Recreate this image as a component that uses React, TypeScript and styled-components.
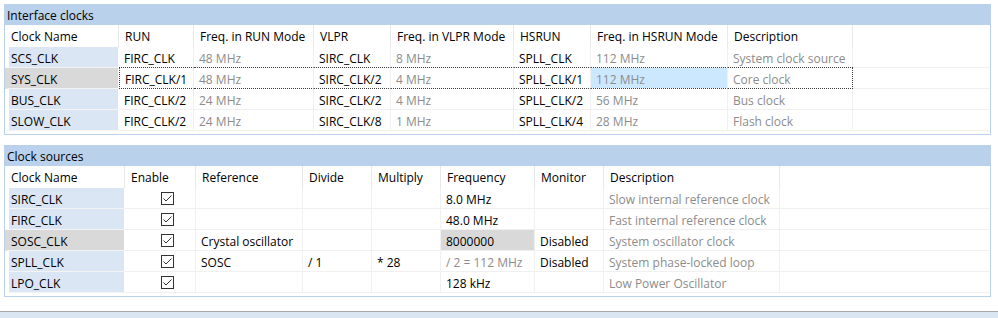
import React from 'react';
import styled, { createGlobalStyle, css } from 'styled-components';

const GlobalStyle = createGlobalStyle`
  html, body {
    margin: 0;
    padding: 0;
    background: #ffffff;
  }
  body {
    font-family: 'Segoe UI', 'Open Sans', 'Noto Sans', sans-serif;
    font-size: 12px;
    color: #000000;
  }
`;

const Page = styled.div`
  width: 998px;
  height: 318px;
  padding: 4px 0 0 4px;
  box-sizing: border-box;
  display: flex;
  flex-direction: column;
  overflow: hidden;
`;

const Panel = styled.section`
  width: 987px;
  border: 1px solid #b9d1ea;
  border-top: none;
  box-sizing: border-box;
  padding-bottom: 3px;
  & + & {
    margin-top: 10px;
  }
`;

const TitleBar = styled.div`
  height: 21px;
  line-height: 24px;
  background: #b9d1ea;
  padding-left: 3px;
  margin: 0 -1px;
  overflow: hidden;
`;

const Row = styled.div<{ $cols: string; $head?: boolean }>`
  display: grid;
  grid-template-columns: ${({ $cols }) => $cols};
  height: ${({ $head }) => ($head ? '22px' : '21px')};
`;

const HeadCell = styled.div<{ $last?: boolean }>`
  border-right: 1px solid ${({ $last }) => ($last ? 'transparent' : '#e8e8e8')};
  padding-left: 6px;
  line-height: 24px;
  white-space: nowrap;
  overflow: hidden;
`;

type Fill = 'none' | 'gray' | 'select';
type Focus = 'start' | 'mid' | 'end';

const fills: Record<Fill, string> = {
  none: 'transparent',
  gray: '#d9d9d9',
  select: '#cce8ff',
};

const Cell = styled.div<{ $muted?: boolean; $fill?: Fill; $focus?: Focus; $last?: boolean }>`
  border-right: 1px solid ${({ $last }) => ($last ? 'transparent' : '#f0f0f0')};
  border-bottom: 1px solid #f0f0f0;
  background: ${({ $fill = 'none' }) => fills[$fill]};
  background-clip: padding-box;
  color: ${({ $muted }) => ($muted ? '#8c8c8c' : '#000000')};
  padding: 1px 0 0 5px;
  line-height: 21px;
  white-space: nowrap;
  overflow: hidden;
  ${({ $focus }) =>
    $focus &&
    css`
      margin-top: -1px;
      border-top: 1px dotted #404040;
      border-bottom: 1px dotted #404040;
    `}
  ${({ $focus }) => $focus === 'start' && css`border-left: 1px dotted #404040;`}
  ${({ $focus }) => $focus === 'end' && css`border-right: 1px dotted #404040;`}
`;

const NameCell = styled.div<{ $selected?: boolean }>`
  border-left: 4px solid ${({ $selected }) => ($selected ? '#d9d9d9' : '#ffffff')};
  border-right: 1px solid #ffffff;
  border-bottom: 1px solid #f4f4f4;
  background: ${({ $selected }) => ($selected ? '#d9d9d9' : '#dae6f4')};
  background-clip: padding-box;
  padding: 1px 0 0 2px;
  line-height: 21px;
  white-space: nowrap;
  overflow: hidden;
`;

const HeadName = styled(HeadCell)`
  padding-left: 6px;
`;

const CheckSlot = styled.div`
  display: flex;
  align-items: center;
  padding-left: 31px;
  height: 19px;
`;

const Footer = styled.div`
  margin: 14px 0 0 -4px;
  width: 998px;
  border-top: 1px solid #a8a8a8;
  height: 8px;
  background: #dbe6f3;
`;

const CheckBox: React.FC = () => (
  <svg width="13" height="13" viewBox="0 0 13 13">
    <rect x="0.5" y="0.5" width="12" height="12" fill="#ffffff" stroke="#333333" />
    <polyline points="2.5,6.5 5,9 10.5,3.5" fill="none" stroke="#333333" strokeWidth="1" />
  </svg>
);

// --- Interface clocks ---

const modeCols = '114px 75px 120px 77px 123px 77px 137px 125px 1fr';

const modeHeads = [
  'RUN',
  'Freq. in RUN Mode',
  'VLPR',
  'Freq. in VLPR Mode',
  'HSRUN',
  'Freq. in HSRUN Mode',
  'Description',
];

interface ModeRow {
  name: string;
  run: string;
  runFreq: string;
  vlpr: string;
  vlprFreq: string;
  hsrun: string;
  hsrunFreq: string;
  desc: string;
}

const modeRows: ModeRow[] = [
  { name: 'SCS_CLK', run: 'FIRC_CLK', runFreq: '48 MHz', vlpr: 'SIRC_CLK', vlprFreq: '8 MHz', hsrun: 'SPLL_CLK', hsrunFreq: '112 MHz', desc: 'System clock source' },
  { name: 'SYS_CLK', run: 'FIRC_CLK/1', runFreq: '48 MHz', vlpr: 'SIRC_CLK/2', vlprFreq: '4 MHz', hsrun: 'SPLL_CLK/1', hsrunFreq: '112 MHz', desc: 'Core clock' },
  { name: 'BUS_CLK', run: 'FIRC_CLK/2', runFreq: '24 MHz', vlpr: 'SIRC_CLK/2', vlprFreq: '4 MHz', hsrun: 'SPLL_CLK/2', hsrunFreq: '56 MHz', desc: 'Bus clock' },
  { name: 'SLOW_CLK', run: 'FIRC_CLK/2', runFreq: '24 MHz', vlpr: 'SIRC_CLK/8', vlprFreq: '1 MHz', hsrun: 'SPLL_CLK/4', hsrunFreq: '28 MHz', desc: 'Flash clock' },
];

const selectedMode = 1;

const InterfaceClocks: React.FC = () => (
  <Panel>
    <TitleBar>Interface clocks</TitleBar>
    <Row $cols={modeCols} $head>
      <HeadName>Clock Name</HeadName>
      {modeHeads.map((h) => (
        <HeadCell key={h}>{h}</HeadCell>
      ))}
      <HeadCell $last />
    </Row>
    {modeRows.map((r, i) => {
      const sel = i === selectedMode;
      const f = (pos: Focus) => (sel ? pos : undefined);
      return (
        <Row $cols={modeCols} key={r.name}>
          <NameCell $selected={sel}>{r.name}</NameCell>
          <Cell $focus={f('start')}>{r.run}</Cell>
          <Cell $focus={f('mid')} $muted>{r.runFreq}</Cell>
          <Cell $focus={f('mid')}>{r.vlpr}</Cell>
          <Cell $focus={f('mid')} $muted>{r.vlprFreq}</Cell>
          <Cell $focus={f('mid')}>{r.hsrun}</Cell>
          <Cell $focus={f('mid')} $muted $fill={sel ? 'select' : 'none'}>{r.hsrunFreq}</Cell>
          <Cell $focus={f('end')} $muted>{r.desc}</Cell>
          <Cell $last />
        </Row>
      );
    })}
  </Panel>
);

// --- Clock sources ---

const sourceCols = '120px 71px 107px 69px 69px 94px 69px 176px 1fr';

const sourceHeads = ['Enable', 'Reference', 'Divide', 'Multiply', 'Frequency', 'Monitor', 'Description'];

interface SourceRow {
  name: string;
  reference?: string;
  divide?: string;
  multiply?: string;
  freq: string;
  freqMuted?: boolean;
  monitor?: string;
  desc: string;
}

const sourceRows: SourceRow[] = [
  { name: 'SIRC_CLK', freq: '8.0 MHz', desc: 'Slow internal reference clock' },
  { name: 'FIRC_CLK', freq: '48.0 MHz', desc: 'Fast internal reference clock' },
  { name: 'SOSC_CLK', reference: 'Crystal oscillator', freq: '8000000', monitor: 'Disabled', desc: 'System oscillator clock' },
  { name: 'SPLL_CLK', reference: 'SOSC', divide: '/ 1', multiply: '* 28', freq: '/ 2 = 112 MHz', freqMuted: true, monitor: 'Disabled', desc: 'System phase-locked loop' },
  { name: 'LPO_CLK', freq: '128 kHz', desc: 'Low Power Oscillator' },
];

const editingSource = 2;

const ClockSources: React.FC = () => (
  <Panel>
    <TitleBar>Clock sources</TitleBar>
    <Row $cols={sourceCols} $head>
      <HeadName>Clock Name</HeadName>
      {sourceHeads.map((h) => (
        <HeadCell key={h}>{h}</HeadCell>
      ))}
      <HeadCell $last />
    </Row>
    {sourceRows.map((r, i) => {
      const editing = i === editingSource;
      return (
        <Row $cols={sourceCols} key={r.name}>
          <NameCell $selected={editing}>{r.name}</NameCell>
          <Cell>
            <CheckSlot>
              <CheckBox />
            </CheckSlot>
          </Cell>
          <Cell>{r.reference}</Cell>
          <Cell>{r.divide}</Cell>
          <Cell>{r.multiply}</Cell>
          <Cell $muted={r.freqMuted} $fill={editing ? 'gray' : 'none'}>{r.freq}</Cell>
          <Cell>{r.monitor}</Cell>
          <Cell $muted>{r.desc}</Cell>
          <Cell $last />
        </Row>
      );
    })}
  </Panel>
);

const App: React.FC = () => (
  <>
    <GlobalStyle />
    <Page>
      <InterfaceClocks />
      <ClockSources />
      <Footer />
    </Page>
  </>
);

export default App;
